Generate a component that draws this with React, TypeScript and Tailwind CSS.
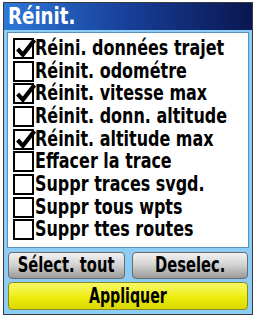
import React from 'react';

const items: { label: string; checked: boolean }[] = [
  { label: 'Réini. données trajet', checked: true },
  { label: 'Réinit. odométre', checked: false },
  { label: 'Réinit. vitesse max', checked: true },
  { label: 'Réinit. donn. altitude', checked: false },
  { label: 'Réinit. altitude max', checked: true },
  { label: 'Effacer la trace', checked: false },
  { label: 'Suppr traces svgd.', checked: false },
  { label: 'Suppr tous wpts', checked: false },
  { label: 'Suppr ttes routes', checked: false },
];

const font = { fontFamily: '"DejaVu Sans Condensed", "DejaVu Sans", sans-serif' };

const CheckBox: React.FC<{ checked: boolean }> = ({ checked }) => (
  <div className="relative w-[21px] h-[21px] shrink-0 border-2 border-black bg-white">
    {checked && (
      <svg className="absolute left-[0px] top-[-2px] w-[21px] h-[21px]" viewBox="0 0 20 20">
        <path d="M2.5 10.5 L7.5 16 L18.5 2" fill="none" stroke="black" strokeWidth="4" strokeLinejoin="miter" />
      </svg>
    )}
  </div>
);

const btn =
  'flex-1 h-[27px] rounded-[4px] border border-[#6b6b6b] bg-gradient-to-b from-[#f2f2f2] via-[#d0d0d0] to-[#9a9a9a] text-black flex items-center justify-center whitespace-nowrap overflow-hidden';

const App: React.FC = () => {
  return (
    <div className="w-[256px] h-[317px] bg-white pt-[2px] px-[3px] pb-[2px]" style={font}>
      <div className="h-full border border-[#3a3a3a] flex flex-col">
        {/* Title bar */}
        <div className="h-[27px] bg-gradient-to-r from-[#2f78d8] via-[#173f98] to-[#0a1650] px-[4px] flex items-center">
          <span className="inline-block origin-left scale-x-[0.88] text-white font-bold text-[23px] leading-none">Réinit.</span>
        </div>

        {/* Body */}
        <div className="flex-1 bg-[#8ecdf3] px-[3px] pt-[2px] pb-[3px] flex flex-col">
          <div className="bg-white border border-[#5b8fc0] pl-[5px] pt-[4px] h-[216px] flex flex-col overflow-hidden">
            {items.map((it) => (
              <div key={it.label} className="h-[22.7px] flex items-center whitespace-nowrap">
                <CheckBox checked={it.checked} />
                <span className="inline-block origin-left scale-x-[0.845] font-bold text-[21px] leading-none text-black ml-[1px]">
                  {it.label}
                </span>
              </div>
            ))}
          </div>

          <div className="flex gap-[7px] mt-[4px] px-[1px]">
            <div className={btn}>
              <span className="inline-block scale-x-[0.78] font-bold text-[21px] leading-none">Sélect. tout</span>
            </div>
            <div className={btn}>
              <span className="inline-block scale-x-[0.78] font-bold text-[21px] leading-none">Deselec.</span>
            </div>
          </div>

          <div className="mt-[3px] mx-[1px] h-[28px] rounded-[4px] border border-[#8a8a20] bg-gradient-to-b from-[#f8f860] via-[#eeee10] to-[#d8d800] text-black flex items-center justify-center whitespace-nowrap">
            <span className="inline-block scale-x-[0.75] font-bold text-[21px] leading-none">Appliquer</span>
          </div>
        </div>
      </div>
    </div>
  );
};

export default App;
